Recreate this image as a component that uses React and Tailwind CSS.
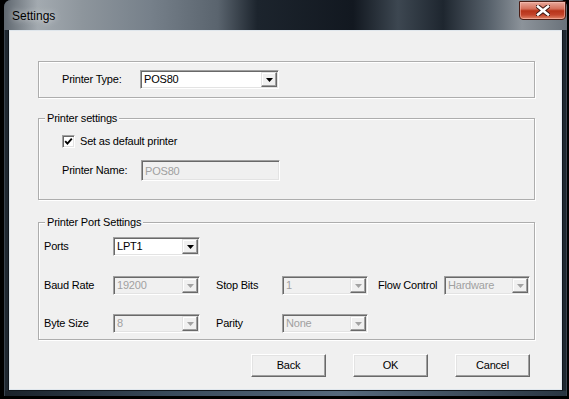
const Arrow = ({ disabled }) => (
  <svg width="7" height="4" viewBox="0 0 7 4">
    <path d="M0 0 H7 L3.5 4 Z" fill={disabled ? "#a3a3a3" : "#000"} />
  </svg>
);

const Combo = ({ value, width, disabled }) => (
  <div
    className={`flex h-[19px] ${width} border border-t-[#a0a0a0] border-l-[#a0a0a0] border-b-white border-r-white shadow-[inset_1px_1px_0_#696969,inset_-1px_-1px_0_#e3e3e3] ${
      disabled ? "bg-[#f0f0f0] text-[#a0a0a0]" : "bg-white text-black"
    }`}
  >
    <div className="flex-1 pl-[3px] pt-[1px] leading-[15px] overflow-hidden whitespace-nowrap">
      {value}
    </div>
    <div className="my-[1px] mr-[1px] flex w-[16px] items-center justify-center border border-t-[#e3e3e3] border-l-[#e3e3e3] border-b-[#696969] border-r-[#696969] bg-[#f0f0f0] shadow-[inset_-1px_-1px_0_#a0a0a0,inset_1px_1px_0_#fff]">
      <Arrow disabled={disabled} />
    </div>
  </div>
);

const Group = ({ label, className, children }) => (
  <div
    className={`relative border border-[#adadad] shadow-[inset_1px_1px_0_#fff,1px_1px_0_#fff] ${className}`}
  >
    {label && (
      <span className="absolute left-[6px] top-[-8px] bg-[#f0f0f0] px-[2px] leading-[14px]">
        {label}
      </span>
    )}
    {children}
  </div>
);

const Button = ({ children }) => (
  <button className="h-[23px] w-[75px] border border-t-white border-l-white border-b-[#696969] border-r-[#696969] bg-[#f0f0f0] shadow-[inset_-1px_-1px_0_#a0a0a0,inset_1px_1px_0_#e3e3e3] text-black">
    {children}
  </button>
);

export default function App() {
  return (
    <div className="h-[399px] w-[569px] overflow-hidden bg-black pl-[4px] font-['Liberation_Sans',Arial,sans-serif] text-[11px] tracking-[-0.2px] text-black">
      {/* window */}
      <div className="flex h-[396px] w-[563px] flex-col rounded-t-[7px] bg-[#1f2831] shadow-[inset_0_0_0_1px_#3a4550]">
        {/* title bar */}
        <div className="relative flex h-[30px] shrink-0 items-start rounded-t-[7px] bg-[linear-gradient(90deg,#5f676f_0%,#a3aab0_6%,#8d959c_14%,#76808a_26%,#5a646e_38%,#1c242d_45%,#121820_62%,#3d4751_70%,#1e262f_78%,#56606a_86%,#8c939a_92%,#6a727a_100%)] pl-[8px] pt-[7px]">
          <span className="text-[12px] tracking-normal text-black [text-shadow:0_0_6px_rgba(255,255,255,0.8)]">
            Settings
          </span>
          <div className="absolute right-[1px] top-[1px] flex h-[19px] w-[47px] items-center justify-center rounded-b-[4px] border border-[#4a1d14] bg-[linear-gradient(180deg,#e8aa9c_0%,#d5705b_40%,#b73419_52%,#c2432a_75%,#e08568_100%)] shadow-[inset_0_0_0_1px_rgba(255,200,190,0.5)]">
            <svg width="14" height="11" viewBox="0 0 14 11">
              <path
                d="M2 1.5 L12 9.5 M12 1.5 L2 9.5"
                stroke="#3a1410"
                strokeWidth="4.5"
                strokeLinecap="square"
              />
              <path
                d="M2 1.5 L12 9.5 M12 1.5 L2 9.5"
                stroke="#fff"
                strokeWidth="2.6"
                strokeLinecap="square"
              />
            </svg>
          </div>
        </div>

        {/* client area */}
        <div className="mx-[5px] flex flex-col border border-[#dfe6ec] bg-[#f0f0f0] pb-[12px] pt-[30px] shadow-[0_0_0_1px_#10161c]">
          <Group className="ml-[28px] h-[37px] w-[497px]">
            <div className="flex h-full items-center pl-[23px]">
              <span className="w-[78px]">Printer Type:</span>
              <Combo value="POS80" width="w-[139px]" />
            </div>
          </Group>

          <Group label="Printer settings" className="ml-[28px] mt-[20px] h-[82px] w-[497px]">
            <div className="flex flex-col pl-[23px] pt-[14px]">
              <div className="flex items-center">
                <div className="flex h-[13px] w-[13px] items-center justify-center border border-t-[#a0a0a0] border-l-[#a0a0a0] border-b-white border-r-white bg-white shadow-[inset_1px_1px_0_#696969,inset_-1px_-1px_0_#e3e3e3]">
                  <svg width="9" height="9" viewBox="0 0 9 9">
                    <path d="M1.2 4.2 L3.4 6.6 L7.8 1.6" stroke="#000" strokeWidth="1.9" fill="none" />
                  </svg>
                </div>
                <span className="ml-[5px]">Set as default printer</span>
              </div>
              <div className="mt-[10px] flex items-center">
                <span className="w-[79px]">Printer Name:</span>
                <div className="h-[21px] w-[139px] border border-t-[#a0a0a0] border-l-[#a0a0a0] border-b-white border-r-white bg-[#f0f0f0] pl-[3px] pt-[2px] text-[#a0a0a0] shadow-[inset_1px_1px_0_#696969,inset_-1px_-1px_0_#e3e3e3]">
                  POS80
                </div>
              </div>
            </div>
          </Group>

          <Group label="Printer Port Settings" className="ml-[28px] mt-[22px] h-[118px] w-[497px]">
            <div className="flex flex-col pl-[5px] pt-[14px]">
              <div className="flex items-center">
                <span className="w-[69px]">Ports</span>
                <Combo value="LPT1" width="w-[87px]" />
              </div>
              <div className="mt-[20px] flex items-center">
                <span className="w-[69px]">Baud Rate</span>
                <Combo value="19200" width="w-[87px]" disabled />
                <span className="ml-[16px] w-[66px]">Stop Bits</span>
                <Combo value="1" width="w-[86px]" disabled />
                <span className="ml-[10px] w-[66px]">Flow Control</span>
                <Combo value="Hardware" width="w-[86px]" disabled />
              </div>
              <div className="mt-[19px] flex items-center">
                <span className="w-[69px]">Byte Size</span>
                <Combo value="8" width="w-[87px]" disabled />
                <span className="ml-[16px] w-[66px]">Parity</span>
                <Combo value="None" width="w-[86px]" disabled />
              </div>
            </div>
          </Group>

          <div className="ml-[241px] mt-[14px] flex gap-[27px]">
            <Button>Back</Button>
            <Button>OK</Button>
            <Button>Cancel</Button>
          </div>
        </div>

        {/* bottom frame */}
        <div className="mx-[1px] mt-[1px] flex-1 bg-[linear-gradient(90deg,#1a222a_0%,#3a4b5c_30%,#56697c_60%,#2a3642_100%)]" />
      </div>
    </div>
  );
}
